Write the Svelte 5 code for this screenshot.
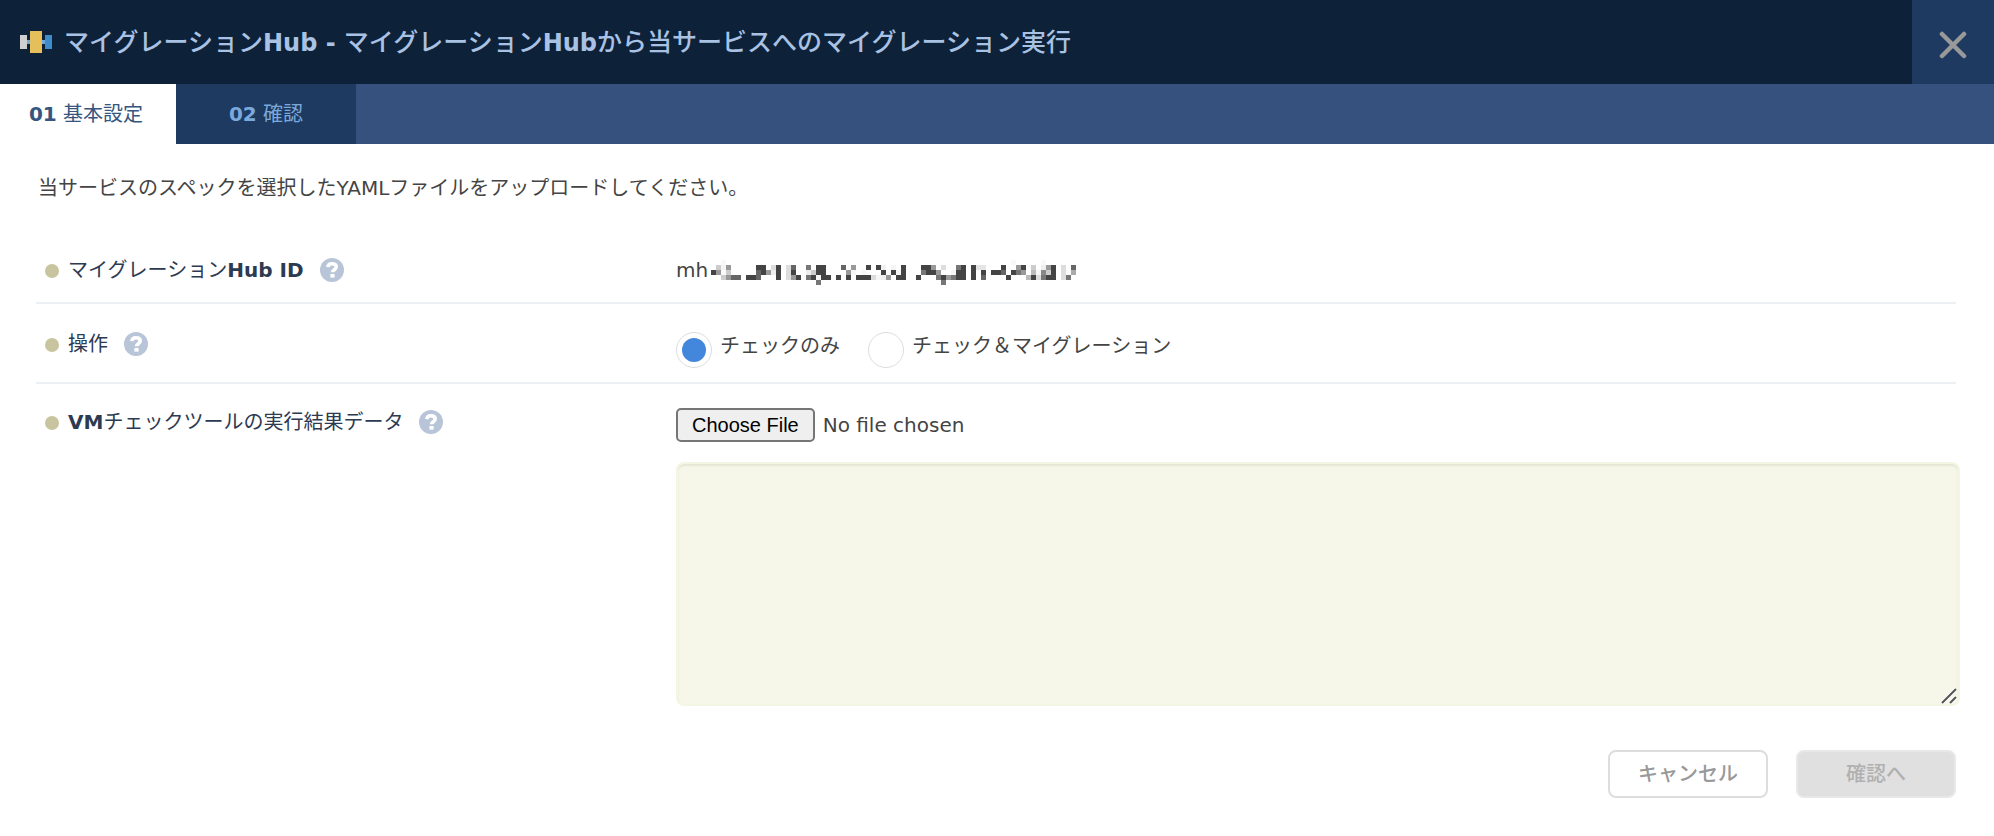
<script>
  let operation = $state('check');
  let result = $state('');

  // Masked part of the identifier: "column:grey level" cells, one list per row.
  const rows = [
    '1:f8 59:f8 65:f8',
    '0:cc 1:f4 2:99 8:44 9:44 11:dd 12:44 14:dd 15:66 18:77 20:44 21:44 25:66 27:99 30:44 32:44 33:f0 35:f5 37:44 41:44 42:44 43:99 45:dd 48:77 49:44 51:44 52:e5 53:e5 57:44 60:99 61:44 63:cc 65:ee 66:99 67:44 69:dd 71:66',
    '-1:44 0:99 1:fa 2:cc 8:66 9:44 10:99 11:ee 12:44 14:dd 15:44 18:ee 19:cc 20:44 21:44 26:99 27:f8 29:f8 33:44 35:44 36:f5 37:44 41:77 42:44 43:44 44:99 47:f5 48:44 49:44 51:44 53:44 55:44 56:44 57:66 59:44 60:77 61:99 63:bb 64:f5 65:88 66:cc 67:44 69:dd 70:fa 71:aa',
    '1:cc 2:99 3:66 4:66 6:44 7:44 8:66 12:44 14:dd 15:99 16:44 18:77 19:44 20:f5 21:44 22:44 24:44 26:44 28:44 29:44 30:44 31:dd 32:f5 33:f0 34:99 36:44 37:44 40:44 44:77 45:44 46:99 47:77 48:44 49:44 51:44 53:66 58:44 62:bb 63:44 64:dd 65:77 66:44 67:44 69:dd 70:77',
    '20:77 45:77',
  ];
  const cells = rows.flatMap((row, y) =>
    row.split(' ').map((cell) => {
      const [x, level] = cell.split(':');
      return { x: Number(x) + 1, y, fill: `#${level}${level}${level}` };
    })
  );
</script>

{#snippet help()}
  <button class="help" type="button" aria-label="ヘルプ">
    <svg viewBox="0 0 24 24" aria-hidden="true">
      <circle cx="12" cy="12" r="12" fill="#b8c5d8" />
      <path d="M7.800 9.200C8 6.700 9.700 5.700 12 5.700c2.400 0 4.200 1.200 4.200 3.300 0 2.800-3.700 2.700-3.700 5.300" fill="none" stroke="#fff" stroke-width="3.600" />
      <rect x="10.400" y="16" width="4.200" height="3.600" fill="#fff" />
    </svg>
  </button>
{/snippet}

<section class="dialog">
  <header>
    <svg class="logo" width="32" height="22" viewBox="0 0 32 22" aria-hidden="true">
      <rect x="6" y="9" width="20" height="4" fill="#72a9dc" />
      <rect x="0" y="4" width="7" height="14" fill="#d0cece" />
      <rect x="10" y="0" width="12" height="22" fill="#e5c05a" />
      <rect x="25" y="4" width="7" height="14" fill="#3f8ccb" />
    </svg>
    <h1>マイグレーション<b>Hub -</b> マイグレーション<b>Hub</b>から当サービスへのマイグレーション実行</h1>
    <button class="close" type="button" aria-label="閉じる">
      <svg width="28" height="28" viewBox="0 0 28 28" aria-hidden="true">
        <path d="M3 3l22 22M25 3L3 25" fill="none" stroke="#999" stroke-width="4.500" stroke-linecap="round" />
      </svg>
    </button>
  </header>

  <nav>
    <button class="tab active" type="button"><b>01</b> 基本設定</button>
    <button class="tab" type="button"><b>02</b> 確認</button>
  </nav>

  <form>
    <p class="intro">当サービスのスペックを選択したYAMLファイルをアップロードしてください。</p>

    <div class="row ident">
      <div class="label"><span class="dot"></span><span>マイグレーション<b>Hub ID</b></span>{@render help()}</div>
      <div class="value masked">
        <span>mh</span>
        <svg width="365" height="25" viewBox="0 0 365 25" shape-rendering="crispEdges" aria-hidden="true">
          {#each cells as c}
            <rect x={c.x * 5} y={c.y * 5} width="5" height="5" fill={c.fill} />
          {/each}
        </svg>
      </div>
    </div>

    <div class="row operation" role="radiogroup" aria-labelledby="op-label">
      <div class="label"><span class="dot"></span><span id="op-label">操作</span>{@render help()}</div>
      <div class="value radios">
        <label><input type="radio" name="op" value="check" bind:group={operation} /><span>チェックのみ</span></label>
        <label><input type="radio" name="op" value="migrate" bind:group={operation} /><span>チェック＆マイグレーション</span></label>
      </div>
    </div>

    <div class="row data">
      <div class="label"><span class="dot"></span><label for="vm-file"><b>VM</b>チェックツールの実行結果データ</label>{@render help()}</div>
      <div class="value">
        <input id="vm-file" type="file" />
        <div class="area">
          <textarea aria-label="VMチェックツールの実行結果データ" bind:value={result}></textarea>
          <svg class="grip" width="16" height="16" viewBox="0 0 16 16" aria-hidden="true">
            <path d="M1 15L15 1M9 15l6-6" fill="none" stroke="#fff" stroke-width="4" />
            <path d="M1 15L15 1M9 15l6-6" fill="none" stroke="#555" stroke-width="2" />
          </svg>
        </div>
      </div>
    </div>

    <footer>
      <button class="btn" type="button">キャンセル</button>
      <button class="btn" type="submit" disabled>確認へ</button>
    </footer>
  </form>
</section>

<style>
  :global(body) {
    background: #fff;
  }
  .dialog {
    font-family: 'DejaVu Sans', 'Noto Sans CJK JP', sans-serif;
    font-size: 20px;
    line-height: 28px;
    color: #444;
  }
  .dialog * {
    box-sizing: border-box;
  }
  button,
  textarea {
    font: inherit;
    margin: 0;
  }
  header {
    display: flex;
    align-items: center;
    height: 84px;
    padding-left: 20px;
    background: #0d2139;
  }
  h1 {
    flex: 1;
    margin: 0 0 0 12px;
    padding-top: 2px;
    font-size: 25px;
    line-height: 32px;
    font-weight: 500;
    color: #a9c1e3;
  }
  h1 b {
    font-size: 24px;
  }
  .close {
    display: flex;
    align-items: center;
    justify-content: center;
    width: 82px;
    height: 84px;
    padding: 6px 0 0;
    border: 0;
    background: #1e3a61;
  }
  nav {
    display: flex;
    height: 60px;
    background: #36517d;
  }
  .tab {
    min-width: 180px;
    padding: 0 24px;
    border: 0;
    background: #1e3a61;
    color: #7ba9dc;
  }
  .tab.active {
    min-width: 176px;
    padding-right: 28px;
    background: #fff;
    color: #36557f;
  }
  form {
    padding: 30px 38px 38px 36px;
  }
  .intro {
    margin: 0 2px 54px;
  }
  .row {
    display: grid;
    grid-template-columns: 1fr 2fr;
    border-bottom: 2px solid #ecf0f5;
  }
  .label {
    display: flex;
    align-items: center;
    height: 28px;
    padding-left: 9px;
    color: #2c3a52;
  }
  .dot {
    width: 14px;
    height: 14px;
    margin: 2px 9px 0 0;
    border-radius: 50%;
    background: #c8c4a0;
  }
  .help {
    width: 24px;
    height: 24px;
    margin-left: 16px;
    padding: 0;
    border: 0;
    background: none;
  }
  .help svg {
    display: block;
  }
  .ident {
    min-height: 48px;
  }
  .masked {
    display: flex;
    gap: 3px;
  }
  .masked svg {
    margin-top: 4px;
  }
  .operation {
    min-height: 80px;
    padding-top: 26px;
  }
  .radios {
    display: flex;
    gap: 28px;
    padding-top: 2px;
  }
  .radios label {
    display: flex;
    gap: 8px;
  }
  .radios input {
    appearance: none;
    width: 36px;
    height: 36px;
    margin: 0;
    padding: 5px;
    border: 1px solid #ddd;
    border-radius: 50%;
    background: #fff;
  }
  .radios input:checked {
    background: #4287db content-box;
  }
  .data {
    padding-top: 24px;
    border-bottom: 0;
  }
  input[type='file'] {
    display: block;
    width: 100%;
    height: 34px;
    font: inherit;
    color: #444;
  }
  input::file-selector-button {
    height: 34px;
    margin: 0 8px 0 0;
    padding: 0 14px;
    border: 2px solid #767676;
    border-radius: 5px;
    background: #efefef;
    color: #000;
    font: 20px 'Liberation Sans', sans-serif;
  }
  .area {
    position: relative;
    margin: 20px -4px 0 0;
  }
  textarea {
    display: block;
    width: 100%;
    height: 244px;
    padding: 12px;
    border: 2px solid #f4f6e4;
    border-radius: 8px;
    background: #f6f7e8;
    box-shadow: inset 0 2px 2px #e4e6d6;
    resize: none;
  }
  .grip {
    position: absolute;
    right: 3px;
    bottom: 2px;
  }
  footer {
    display: flex;
    justify-content: flex-end;
    gap: 28px;
    margin-top: 44px;
  }
  .btn {
    width: 160px;
    height: 48px;
    padding: 0;
    border: 2px solid #ddd;
    border-radius: 8px;
    background: #fff;
    color: #999;
    font-weight: 500;
  }
  .btn:disabled {
    border-color: #e8e8e8;
    background: #e0e0e0;
    color: #b0b0b0;
  }
</style>
